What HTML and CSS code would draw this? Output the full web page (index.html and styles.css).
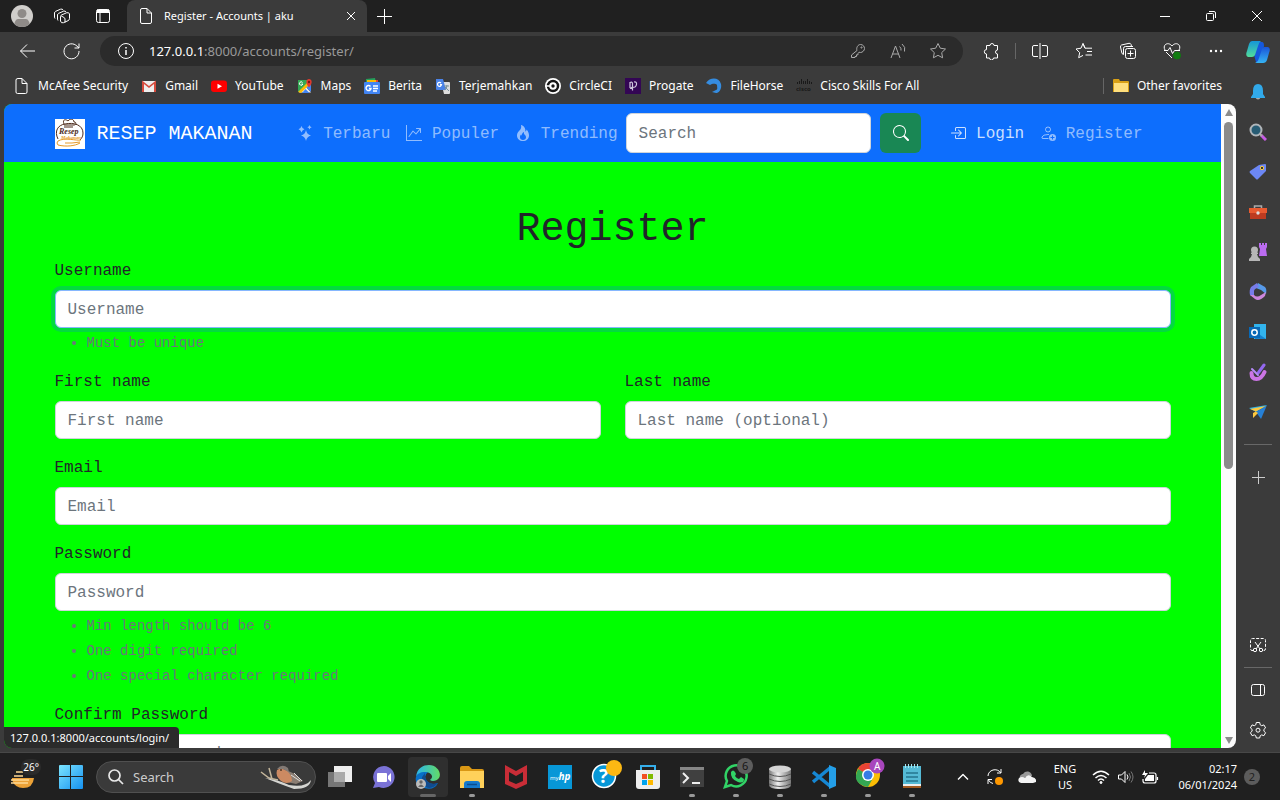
FILE: index.html
```html
<!DOCTYPE html>
<html lang="en">
<head>
<meta charset="utf-8">
<title>Register - Accounts | aku</title>
<meta name="viewport" content="width=device-width, initial-scale=1">
<link rel="stylesheet" href="styles.css">
</head>
<body>
<header class="tabstrip">
  <button class="tool tool-profile" aria-label="Profile"><svg width="22" height="22" viewBox="0 0 22 22"><defs><clipPath id="av"><circle cx="11" cy="11" r="11"/></clipPath></defs><g clip-path="url(#av)"><path fill="#d0cecb" d="M0 0h22v22H0z"/><circle cx="11" cy="8.500" r="4.500" fill="#8f8b88"/><path fill="#8f8b88" d="M3 22c0-5 2-8 4-8h8c2 0 4 3 4 8z"/></g></svg></button>
  <button class="tool tool-spaces" aria-label="Workspaces"><svg class="line" width="18" height="18" viewBox="0 0 18 18"><path d="M7.500 9.500q0-1 1-1.500l5-2.200q2.500-.8 3 1.200v4.500q0 1.500-1.500 2.200l-4.500 2q-2.500.8-3-1.700zM8 8.800l3 1.700q1 .5 1 1.500v3.500M5 13.500q-.5-.6-.5-1.500V8q0-1 1-1.600l5-2.200q2-.7 2.700 1M2 11.500q-.5-.6-.5-1.500V6q0-1 1-1.600l5-2.200q2-.7 2.700 1"/></svg></button>
  <button class="tool" aria-label="Tab actions"><svg class="line" width="16" height="16" viewBox="0 0 16 16"><rect x="1.500" y="1.500" width="13" height="13" rx="2"/><path d="M1.500 4.500h13M5 4.500v10" /><path d="M2 3h12" stroke-width="3"/></svg></button>
  <div class="tab">
    <svg class="line" width="14" height="18" viewBox="0 0 14 18"><path d="M3 1.500h5l4.500 4.500v9q0 1.500-1.500 1.500H3q-1.500 0-1.500-1.500V3Q1.500 1.500 3 1.500zM8 1.500V6h4.500"/></svg>
    <span class="tab-title">Register - Accounts | aku</span>
    <button aria-label="Close tab"><svg class="line" width="12" height="12" viewBox="0 0 12 12"><path d="M2 2l8 8M10 2l-8 8"/></svg></button>
  </div>
  <button class="new-tab" aria-label="New tab"><svg class="line" width="15" height="15" viewBox="0 0 15 15"><path d="M7.500 0v15M0 7.500h15"/></svg></button>
  <div class="window-controls">
    <button aria-label="Minimize"><svg class="line" width="10" height="10" viewBox="0 0 10 10"><path d="M0 5.500h10"/></svg></button>
    <button aria-label="Restore"><svg class="line" width="12" height="12" viewBox="0 0 12 12"><rect x="1.500" y="3.500" width="7" height="7" rx="1"/><path d="M4 1.500h5q1.500 0 1.500 1.500v5"/></svg></button>
    <button aria-label="Close"><svg class="line" width="12" height="12" viewBox="0 0 12 12"><path d="M1 1l10 10M11 1L1 11"/></svg></button>
  </div>
</header>

<div class="browser">
  <div class="browser-main">
    <div class="toolbar">
      <button class="tool tool-back" aria-label="Back"><svg class="line" width="18" height="16" viewBox="0 0 18 16"><path d="M8 1.500 1.500 8 8 14.500M1.500 8H16"/></svg></button>
      <button class="tool" aria-label="Refresh"><svg class="line" width="18" height="18" viewBox="0 0 18 18"><path d="M16 9A7.500 7.500 0 1 1 14 4.200L16 6M16 1.500V6h-4.500"/></svg></button>
      <div class="address">
        <svg class="line" width="18" height="18" viewBox="0 0 18 18"><circle cx="9" cy="9" r="7.500"/><path d="M9 8v5M9 5v1.500" stroke-width="1.500"/></svg>
        <span class="url"><b>127.0.0.1</b>:8000/accounts/register/</span>
        <button class="tool dim" aria-label="Saved passwords"><svg class="line" width="16" height="16" viewBox="0 0 16 16"><path d="M7 7.500C6 4.500 8 1.500 10.500 1.500s4 2 4 4S12.500 9.500 10.500 9.500L9 9.200 8 10.500v1.300H6.500v1.700H5v1H1.500V12z"/><circle cx="11.500" cy="4.500" r=".6"/></svg></button>
        <button class="tool dim" aria-label="Read aloud"><svg class="line" width="16" height="16" viewBox="0 0 16 16"><path d="M1 15 5.500 3 10 15M2.500 11h6M9.500 3.500q2 1.500 1.500 4M12 1q4 3 2.500 7.500"/></svg></button>
        <button class="tool dim" aria-label="Add to favorites"><svg class="line" width="18" height="18" viewBox="0 0 18 18"><path d="M9 1.500l2.300 4.700 5.200.8-3.800 3.600.9 5.200L9 13.300l-4.600 2.500.9-5.200L1.500 7l5.200-.8z"/></svg></button>
      </div>
      <button class="tool" aria-label="Extensions"><svg class="line" width="16" height="17" viewBox="0 0 16 17"><path d="M4 2.500h3a2 2 0 0 1 4 0h3.500V7a2 2 0 0 0 0 4v4h-4a2 2 0 0 1-4 0H3.500v-4a2.200 2.200 0 1 1 0-4.400V2.500z"/></svg></button>
      <span class="rule"></span>
      <button class="tool" aria-label="Split screen"><svg class="line" width="18" height="16" viewBox="0 0 18 16"><path d="M7 2.500H3Q1.500 2.500 1.500 4v8q0 1.500 1.500 1.500h4M11 2.500h4q1.500 0 1.500 1.500v8q0 1.500-1.500 1.500h-4M9 0v16"/></svg></button>
      <button class="tool" aria-label="Favorites"><svg class="line" width="18" height="18" viewBox="0 0 18 18"><path d="M10 6.200 8 1.500 6 6.200 1 7l3.700 3.600-1 5.100L8 13.400M8 1.500l2 4.700h7M12 9.500h5M10.500 13H17"/></svg></button>
      <button class="tool" aria-label="Collections"><svg class="line" width="18" height="18" viewBox="0 0 18 18"><rect x="6.500" y="6.500" width="10" height="10" rx="2"/><path d="M11.500 8.500v6M8.500 11.500h6M4.500 12.500 3 11.500 1.500 5q-.2-1.500 1-2L10 1.300q1.500-.2 2 1l.4 1.700M4.500 12.500V6.500q0-2 2-2H14"/></svg></button>
      <button class="tool" aria-label="Browser essentials"><svg class="line" width="18" height="18" viewBox="0 0 18 18"><path d="M2 8C-1 3 5-1 9 4c4-5 10-1 7 4M3 10l6 6M1 8.500h4l2-3 2.500 6 2-3H17"/><circle cx="14" cy="13.500" r="3.500" fill="#107c10" stroke="#107c10"/></svg></button>
      <button class="tool" aria-label="Settings and more"><svg width="14" height="4" viewBox="0 0 14 4" fill="#fff"><circle cx="2" cy="2" r="1.200"/><circle cx="7" cy="2" r="1.200"/><circle cx="12" cy="2" r="1.200"/></svg></button>
    </div>

    <nav class="bookmarks" aria-label="Favorites bar">
      <a href="#"><svg class="line" width="16" height="18" viewBox="0 0 16 18"><path d="M4 1.500h4l5 5V15q0 1.500-1.500 1.500H3.500Q2 16.500 2 15V3Q2 1.500 4 1.500zM8 1.500v5h5"/></svg>McAfee Security</a>
      <a href="#"><svg width="16" height="16" viewBox="0 0 16 16"><path fill="#eee" d="M1 3h14v11H1z"/><path fill="#d54b3d" d="M1 2.500 8 8l7-5.500V14h-2V6L8 10 3 6v8H1z"/></svg>Gmail</a>
      <a href="#"><svg width="16" height="16" viewBox="0 0 16 16"><rect y="2.500" width="16" height="11.500" rx="3" fill="red"/><path fill="#fff" d="M6.500 5.700v5L11 8.200z"/></svg>YouTube</a>
      <a href="#"><svg width="16" height="16" viewBox="0 0 16 16"><path fill="#34a853" d="M1 2h10v7L1 14z"/><path fill="#4285f4" d="M8 8l6 6V5z"/><path fill="#f1f1f1" d="M2 14.500 8 8l6 6.500z"/><path fill="#fbbc04" d="M1 14 10 5l2 2-8 8z"/><path fill="#4285f4" d="M5 15l3.500-4 4 4z"/><path fill="#e33b2e" d="M12 9.500C8 5 9 1 12 1s4 4 0 8.500z"/><circle cx="12" cy="4" r="1.200" fill="#7a1710"/><path fill="none" stroke="#fff" d="M5.500 4.500a1.700 1.700 0 1 0 .3 1.500H4.500"/></svg>Maps</a>
      <a href="#"><svg width="16" height="16" viewBox="0 0 16 16"><path fill="#24a05a" d="M2 1l9-1 1 5H2z"/><path fill="#fbbc04" d="M3 2h11v4H3z"/><path fill="#e84335" d="M12 2h2v3h-2z"/><rect y="4" width="16" height="12" rx="1" fill="#4285f4"/><path fill="none" stroke="#fff" stroke-width="1.400" d="M6.500 8.500a2.500 2.500 0 1 0 .5 2H5M9 8h5M9 10.500h5M9 13h4"/></svg>Berita</a>
      <a href="#"><svg width="16" height="16" viewBox="0 0 16 16"><path fill="#ddd" d="M6 4h8q1 0 1 1v10q0 1-1 1H9z"/><path fill="#4a83e8" d="M1 1h7l3 11H2q-1 0-1-1z"/><path fill="none" stroke="#fff" stroke-width="1.200" d="M6 5a2 2 0 1 0 .5 1.700H5"/><path stroke="#78909c" fill="none" d="M9 8h5M12 7q0 4-3 5M10 9l4 4"/></svg>Terjemahkan</a>
      <a href="#"><svg width="16" height="16" viewBox="0 0 16 16"><circle cx="8" cy="8" r="8" fill="#fff"/><circle cx="8" cy="8" r="5" fill="none" stroke="#161616" stroke-width="2.500"/><circle cx="8" cy="8" r="1.700" fill="#161616"/><path stroke="#fff" stroke-width="1.500" d="M0 8h5"/></svg>CircleCI</a>
      <a href="#"><svg width="16" height="16" viewBox="0 0 16 16"><path fill="#330654" d="M0 0h16v16H0z"/><path stroke="#cfc6dc" stroke-width="1.200" fill="none" d="M5 10V4.500q2.500-1 2.500 1V9L5 10.500M9 4q3-.5 2.500 2.500T7.500 9.500v3"/></svg>Progate</a>
      <a href="#"><svg width="16" height="16" viewBox="0 0 16 16"><path fill="#358ce0" d="M0 5C4-1 13-1 15 6c1 5-2 9-5 9l-4-1 4-2c2-1 1-3 1-5-2-2-5-1-7 0l-2-1z"/></svg>FileHorse</a>
      <a href="#"><svg width="16" height="16" viewBox="0 0 16 16"><path stroke="#191919" d="M1.500 4v2M3.500 3v3M5.500 1v5M7.500 3v3M9.500 3v3M11.500 1v5M13.500 3v3M15.500 4v2"/><text y="13" class="cisco">cisco</text></svg>Cisco Skills For All</a>
      <span class="rule"></span>
      <a href="#"><svg width="16" height="16" viewBox="0 0 16 16"><path fill="#d9a016" d="M0 2q0-1 1-1h5l1 2h8q1 0 1 1v10H0z"/><path fill="#ffdf7d" d="M1 5h14v9H1z"/></svg>Other favorites</a>
    </nav>

    <div class="viewport">
      <div class="page">
        <nav class="navbar">
          <div class="container nav-row">
            <a class="brand" href="#"><svg width="30" height="30" viewBox="0 0 30 30"><path fill="#fff" d="M0 0h30v30H0z"/><g fill="none" stroke="#4d2c1d"><path d="M3 20C-1 12 3 6 10 5c9-2 18 1 18 9 0 3-1 5-3 7M9 5C7 0 11 0 13 2c2-3 6-2 6 1 3 0 2 3 0 3H9M9 8h9"/><path stroke="#e59b28" d="M3 22c7-4 18 0 23-1M3 26c8 2 17 1 22-2M3 22q-2 2 0 4M10 24h7l8-1"/></g><text x="4" y="15" class="logo-a">Resep</text><text x="6" y="20" class="logo-b">Makanan</text></svg>RESEP MAKANAN</a>
            <div class="nav-links">
              <a href="#"><svg width="16" height="16" viewBox="0 0 16 16" fill="currentColor"><path d="M8 5q.8 4.500 5 5.500Q8.800 11.500 8 16q-.8-4.500-5-5.500Q7.200 9.500 8 5zM3.500 1q.6 2.600 3 3.200-2.400.7-3 3.300-.6-2.600-3-3.300 2.400-.6 3-3.200zM11.500 0q.4 1.700 2.200 2.200-1.800.5-2.200 2.300-.4-1.800-2.200-2.300 1.800-.5 2.200-2.200z"/></svg> Terbaru</a>
              <a href="#"><svg width="16" height="16" viewBox="0 0 16 16" fill="currentColor"><path fill-rule="evenodd" d="M0 0h1v15h15v1H0V0Zm10 3.500a.5.5 0 0 1 .5-.5h4a.5.5 0 0 1 .5.5v4a.5.5 0 0 1-1 0V4.900l-3.613 4.417a.5.5 0 0 1-.74.037L7.060 6.767l-3.656 5.027a.5.5 0 0 1-.808-.588l4-5.500a.5.5 0 0 1 .758-.06l2.609 2.610L13.445 4H10.500a.5.5 0 0 1-.5-.5Z"/></svg> Populer</a>
              <a href="#"><svg width="16" height="16" viewBox="0 0 16 16" fill="currentColor"><path d="M8 16c3.314 0 6-2 6-5.500 0-1.500-.5-4-2.500-6 .25 1.500-1.250 2-1.250 2C11 4 9 .5 6 0c.357 2 .5 4-2 6-1.250 1-2 2.729-2 4.500C2 14 4.686 16 8 16Zm0-1c-1.657 0-3-1-3-2.750 0-.75.25-2 1.250-3C6.125 10 7 10.500 7 10.500c-.375-1.250.5-3.250 2-3.500-.179 1-.25 2 1 3 .625.5 1 1.364 1 2.250C11 14 9.657 15 8 15Z"/></svg> Trending</a>
            </div>
            <form class="site-search">
              <input type="search" placeholder="Search" aria-label="Search">
              <button type="button" aria-label="Search"><svg width="16" height="16" viewBox="0 0 16 16" fill="currentColor"><path d="M11.742 10.344a6.500 6.500 0 1 0-1.397 1.398h-.001c.03.04.062.078.098.115l3.850 3.850a1 1 0 0 0 1.415-1.414l-3.850-3.850a1.007 1.007 0 0 0-.115-.1zM12 6.500a5.500 5.500 0 1 1-11 0 5.500 5.500 0 0 1 11 0z"/></svg></button>
            </form>
            <div class="nav-links account-links">
              <a href="#" class="hovered"><svg width="16" height="16" viewBox="0 0 16 16" fill="currentColor"><path d="M6 3.500a.5.5 0 0 1 .5-.5h8a.5.5 0 0 1 .5.5v9a.5.5 0 0 1-.5.5h-8a.5.5 0 0 1-.5-.5v-2a.5.5 0 0 0-1 0v2A1.500 1.500 0 0 0 6.500 14h8a1.500 1.500 0 0 0 1.500-1.500v-9A1.500 1.500 0 0 0 14.500 2h-8A1.500 1.500 0 0 0 5 3.500v2a.5.5 0 0 0 1 0v-2z"/><path d="M11.854 8.354a.5.5 0 0 0 0-.708l-3-3a.5.5 0 1 0-.708.708L10.293 7.500H1.500a.5.5 0 0 0 0 1h8.793l-2.147 2.146a.5.5 0 0 0 .708.708l3-3z"/></svg> Login</a>
              <a href="#"><svg width="16" height="16" viewBox="0 0 16 16" fill="none" stroke="currentColor"><circle cx="8" cy="4.500" r="2.500"/><path d="M8.500 13.500H2.700q-1 0-.7-1.500 1-2.500 6-2.500h1"/><circle cx="12.500" cy="12.500" r="3.500" fill="currentColor" stroke="none"/><path stroke="#0d6efd" d="M12.500 10.500v4M10.500 12.500h4"/></svg> Register</a>
            </div>
          </div>
        </nav>

        <main class="container">
          <form class="register">
            <h1>Register</h1>
            <div class="field field-help">
              <label for="username">Username</label>
              <input class="focused" id="username" type="text" placeholder="Username">
              <ul><li>Must be unique</li></ul>
            </div>
            <div class="field-pair">
              <div class="field"><label for="first">First name</label><input id="first" type="text" placeholder="First name"></div>
              <div class="field"><label for="last">Last name</label><input id="last" type="text" placeholder="Last name (optional)"></div>
            </div>
            <div class="field"><label for="email">Email</label><input id="email" type="email" placeholder="Email"></div>
            <div class="field field-help">
              <label for="password">Password</label>
              <input id="password" type="password" placeholder="Password">
              <ul><li>Min length should be 6</li><li>One digit required</li><li>One special character required</li></ul>
            </div>
            <div class="field"><label for="confirm">Confirm Password</label><input id="confirm" type="password" placeholder="Confirm password"></div>
          </form>
        </main>
      </div>
      <div class="scrollbar"><i class="arrow-up"></i><div class="track"><div class="thumb"></div></div><i class="arrow-down"></i></div>
      <div class="status">127.0.0.1:8000/accounts/login/</div>
    </div>
  </div>

  <aside class="sidebar">
    <button aria-label="Copilot"><svg width="24" height="22" viewBox="0 0 24 22"><defs><linearGradient id="c1" x2="0" y2="1"><stop stop-color="#1596d8"/><stop offset="1" stop-color="#52dd9a"/></linearGradient><linearGradient id="c2" x2="0" y2="1"><stop stop-color="#1a55d8"/><stop offset="1" stop-color="#35b4f4"/></linearGradient></defs><path fill="#1558dc" d="M8 14 12 1h4q2 0 2 4L14 20q-1 2-4 1z"/><path fill="url(#c1)" d="M6 0h9q-2 1-3 5l-3 9q-1 2-3 2H2q-3-1-1-6L3 3q1-3 3-3z"/><path fill="url(#c2)" d="M18 6h4q3 1 1 6l-2 7q-1 3-4 3H9q3-1 4-5l3-9q1-2 2-2z"/></svg></button>
    <button aria-label="Notifications"><svg width="16" height="18" viewBox="0 0 16 18"><path fill="#aaa" d="M5 14h6q-3 5-6 0z"/><path fill="#31a9e9" d="M8 1q5 0 5 7v3l2 3v1H1v-1l2-3V8q0-7 5-7z"/></svg></button>
    <button aria-label="Search"><svg width="18" height="18" viewBox="0 0 18 18"><path stroke="#c75ce5" stroke-width="3" d="m12 12 5 5"/><path stroke="#aaa" stroke-width="2" d="m10 10 3 3"/><circle cx="7" cy="7" r="5.500" fill="#275c74" stroke="#b0b5b9" stroke-width="2"/></svg></button>
    <button aria-label="Shopping"><svg width="18" height="18" viewBox="0 0 18 18"><path fill="#6c87f5" d="M10 2 16 1q1 0 1 1v6l-8 8q-1 1-2 0L1 10q-1-1 0-2z"/><circle cx="13" cy="5" r="1.700" fill="#333" stroke="#ffce37"/></svg></button>
    <button aria-label="Tools"><svg width="18" height="16" viewBox="0 0 18 16"><path fill="none" stroke="#aaa" stroke-width="1.500" d="M5.500 5V2h7v3"/><path fill="#e85a30" d="M0 4h18v5H0z"/><path fill="#bd3b20" d="M1 9h16v6H1z"/><circle cx="9" cy="9" r="1.700" fill="#ddd"/></svg></button>
    <button aria-label="Games"><svg width="18" height="18" viewBox="0 0 18 18"><path fill="#bb6cf0" d="M10 0h2v2h1V0h2v2h1V0h2v4l-1 2 1 7h-8l1-7-1-2z"/><path fill="#b6b6b6" d="M2 7a3.500 3.500 0 1 1 7 0q0 1.500-1 2.500h1V11H8l1 3 2 2v2H0v-2l2-2 1-3H2V9.500h1Q2 8.500 2 7z"/></svg></button>
    <button aria-label="Microsoft 365"><svg width="18" height="18" viewBox="0 0 18 18"><path fill="#579ae9" d="M9 0 16 4q2 2 1 7l-5-4-5-2z"/><path fill="#777ce9" d="M8 0 2 4Q0 7 1 12l4 2V8q0-2 5-4z"/><path fill="#cc87dc" d="M1 12l5 4q4 3 10-3l1-4-5 3q-4 3-7 0z"/></svg></button>
    <button aria-label="Outlook"><svg width="18" height="18" viewBox="0 0 18 18"><path fill="#32b4ed" d="M5 1h12v15H5z"/><path fill="#1682ce" d="M7 9l10 7H6z"/><path fill="#0869b7" d="M0 4h11v11H0z"/><circle cx="5.500" cy="9.500" r="2.700" fill="none" stroke="#fff" stroke-width="1.500"/></svg></button>
    <button aria-label="Designer"><svg width="18" height="18" viewBox="0 0 18 18"><path fill="none" stroke="#cc75e5" stroke-width="4" stroke-linecap="round" d="M2.500 10q0 6 5 6t8-7"/><path stroke="#9368ef" stroke-width="3" stroke-linecap="round" d="M9.500 9.500 15 2"/><path stroke="#b68bf8" stroke-width="2" stroke-linecap="round" d="M3 6l6 6"/></svg></button>
    <button aria-label="Drop"><svg width="18" height="14" viewBox="0 0 18 14"><path fill="#33b5e8" d="M0 3 18 0 7 7z"/><path fill="#2680d6" d="M18 0 12 14 7 7z"/><path fill="#ffc83d" d="M1 4l16-3L4 8v5l5-5-3-2z"/></svg></button>
    <hr>
    <button aria-label="Customize"><svg class="line thin" width="13" height="13" viewBox="0 0 13 13"><path d="M6.500 0v13M0 6.500h13"/></svg></button>
    <div class="sidebar-bottom">
      <button aria-label="Screenshot"><svg class="line" width="18" height="16" viewBox="0 0 18 16"><path stroke-dasharray="3 1.500" d="M4 13.500H3q-1.500 0-1.500-2v-8q0-2 2-2h11q2 0 2 2v8q0 2-1.500 2h-1"/><path d="m6 5 5 7M12 5l-5 7"/><circle cx="6" cy="13" r="1.700"/><circle cx="12" cy="13" r="1.700"/></svg></button>
      <hr>
      <button aria-label="Hide sidebar"><svg class="line" width="16" height="14" viewBox="0 0 16 14"><rect x="1.500" y="1.500" width="13" height="11" rx="2"/><path d="M10.500 1.500v11"/></svg></button>
      <button aria-label="Settings"><svg class="line" width="18" height="18" viewBox="0 0 18 18"><path d="M7.300 1.500h3.400l.5 2.300 1.500.9 2.200-.8 1.700 3-1.700 1.500v1.800l1.700 1.500-1.700 3-2.200-.8-1.500.9-.5 2.200H7.300l-.5-2.200-1.500-.9-2.200.8-1.700-3 1.700-1.500V8.400L1.400 6.900l1.700-3 2.200.8 1.500-.9z"/><circle cx="9" cy="9.200" r="2"/></svg></button>
    </div>
  </aside>
</div>

<footer class="taskbar">
  <button class="weather" aria-label="Weather"><svg width="26" height="26" viewBox="0 0 26 26"><path fill="#eca237" d="M2 14h22q-1 10-11 10-8 0-11-8z"/><path stroke="#ffd993" stroke-width="1.500" d="M6 8h7M4 12h9M1 16h18M1 19h17"/></svg><span>26°</span></button>
  <button class="start" aria-label="Start"><svg width="24" height="24" viewBox="0 0 24 24"><defs><linearGradient id="w" x2="1" y2="1"><stop stop-color="#7ce5ff"/><stop offset="1" stop-color="#1591f0"/></linearGradient></defs><path fill="url(#w)" d="M0 1q0-1 1-1h10v11H0zM12 0h11q1 0 1 1v10H12zM0 12h11v12H1q-1 0-1-1zM12 12h12v11q0 1-1 1H12z"/></svg></button>
  <div class="task-search">
    <svg width="16" height="16" viewBox="0 0 16 16" fill="none" stroke="#e8e8e8" stroke-width="1.700"><circle cx="6.500" cy="6.500" r="5.500"/><path d="m10.500 10.500 4.500 4.500"/></svg>
    <input type="text" placeholder="Search" aria-label="Search Windows">
    <svg width="52" height="26" viewBox="0 0 52 26"><path fill="none" stroke="#c4b69b" stroke-width="1.500" d="M1 8l8 6 9 2M9 4l3 11"/><path fill="#d6d6d2" d="M5 14q14 2 24 7 16 3 22-5-1 9-17 9Q20 20 5 14z"/><path fill="#8a7d72" d="M26 6l9 4 8 7-7 3-9-2z"/><path fill="#cc8a62" d="M17 6q5-3 10 1 5 4 5 10-5 4-11 0-6-5-4-11z"/><path fill="#827a75" d="M17 5q5-6 11-1l1 4-6-3z"/><path stroke="#ddd" fill="none" d="m31 11 9 6M34 9l8 8"/><circle cx="21" cy="6" r=".8"/></svg>
  </div>
  <div class="apps">
    <button aria-label="Task view"><svg width="24" height="24" viewBox="0 0 24 24"><path fill="#eee" d="M6 1h18v16H6z"/><path fill="#777" d="M0 7h17v15H0z"/><path fill="#aaa" d="M6 7h11v10H6z"/></svg></button>
    <button aria-label="Chat"><svg width="24" height="24" viewBox="0 0 24 24"><path fill="#7a72d6" d="M12 1a11 11 0 1 1-5 21l-6 1 2-5A11 11 0 0 1 12 1z"/><rect x="5" y="8" width="10" height="9" rx="1" fill="#fff"/><path fill="#fff" d="m16 11 3-3v9l-3-3z"/></svg></button>
    <button class="running active" aria-label="Edge"><svg width="26" height="26" viewBox="0 0 26 26"><defs><linearGradient id="e1"><stop stop-color="#29b4ee"/><stop offset="1" stop-color="#63db65"/></linearGradient></defs><path fill="#0870c8" d="M1 13Q4 5 13 8q-5 4-1 9t11 2q-4 8-14 5T1 13z"/><path fill="url(#e1)" d="M1 13C2 4 8 1 14 1c8 0 13 8 10 13-2 3-7 4-9 2 5-4 0-8-5-8S2 10 1 13z"/><path fill="#114b8d" d="M10 9q-7 7 1 14 6 3 12-4-6 2-10-1-4-4-3-9z"/><circle cx="6" cy="20" r="5" fill="#bbb"/><circle cx="6" cy="18" r="1.700" fill="#666"/><path fill="#666" d="M3 23q3-5 6 0z"/></svg></button>
    <button class="running" aria-label="File Explorer"><svg width="26" height="24" viewBox="0 0 26 24"><path fill="#d99714" d="M1 3q0-2 2-2h7l3 3h10q2 0 2 2v7H1z"/><path fill="#ffd15a" d="M1 6h24v17H1z"/><path fill="#1679cc" d="M5 23v-4q0-3 3-3h10q3 0 3 3v4z"/><path stroke="#0c4d8e" stroke-width="1.500" d="M8 19.500h10"/></svg></button>
    <button aria-label="McAfee"><svg width="22" height="24" viewBox="0 0 22 24"><path fill="#c92d37" d="m0 0 11 6L22 0v19l-11 5L0 19zM4 7v9l7 3 7-3V7l-7 4z" fill-rule="evenodd"/></svg></button>
    <button aria-label="myHP"><svg width="24" height="24" viewBox="0 0 24 24"><path fill="#0797d7" d="M0 0h24v24H0z"/><text x="2" y="15" class="myhp">my<tspan class="hp">hp</tspan></text></svg></button>
    <button aria-label="HP Support"><svg class="over" width="32" height="30" viewBox="0 0 32 30"><circle cx="14" cy="17" r="11.500" fill="#0797d7" stroke="#fff" stroke-width="1.500"/><text x="9" y="24" class="question">?</text><circle cx="24" cy="9" r="8" fill="#fcb813"/></svg></button>
    <button aria-label="Microsoft Store"><svg width="24" height="26" viewBox="0 0 24 26"><path fill="none" stroke="#35aeea" stroke-width="2" d="M5 6V2h14v4"/><path fill="#eee" d="M0 6h24v16q0 3-3 3H3q-3 0-3-3z"/><path fill="#f25022" d="M6 10h5v5H6z"/><path fill="#7fba00" d="M12 10h5v5h-5z"/><path fill="#00a4ef" d="M6 16h5v5H6z"/><path fill="#ffb900" d="M12 16h5v5h-5z"/></svg></button>
    <button class="running" aria-label="Terminal"><svg width="24" height="20" viewBox="0 0 24 20"><path fill="#404040" d="M0 0h24v20H0z"/><path fill="#858585" d="M0 0h24v3H0z"/><path fill="none" stroke="#eee" stroke-width="2" d="m3 6 5 5-5 5M12 16h8"/></svg></button>
    <button class="running" aria-label="WhatsApp"><svg class="over" width="30" height="32" viewBox="0 0 30 32"><path fill="none" stroke="#31d366" stroke-width="2.500" d="m2 29 2-6a10.500 10.500 0 1 1 4 4z"/><path fill="#31d366" d="M8 14q2-3 4 0l1 2-1 2q2 3 4 3l2-2 3 2q0 5-6 3-8-3-7-10z"/><circle cx="22" cy="8" r="8" fill="#5d5d5d"/><text x="19" y="12" class="count">6</text></svg></button>
    <button class="running" aria-label="Database"><svg width="24" height="24" viewBox="0 0 24 24"><defs><linearGradient id="d"><stop stop-color="#777"/><stop offset=".4" stop-color="#eee"/><stop offset="1" stop-color="#777"/></linearGradient></defs><path fill="url(#d)" d="M1 4h22v16q0 4-11 4T1 20z"/><path fill="none" stroke="#555" d="M1 9q11 5 22 0M1 14q11 5 22 0M1 19q11 5 22 0"/><ellipse cx="12" cy="4" rx="11" ry="3.500" fill="#d4d4d4"/></svg></button>
    <button class="running" aria-label="Visual Studio Code"><svg width="24" height="24" viewBox="0 0 24 24"><path fill="none" stroke="#1687d3" stroke-width="3.500" d="M18 3 1 17M1 7l17 14"/><path fill="#249fe8" d="m17 0 7 3v18l-7 3z"/></svg></button>
    <button class="running" aria-label="Chrome"><svg class="over" width="30" height="32" viewBox="0 0 30 32"><circle cx="13" cy="17" r="12" fill="#fbbc04"/><path fill="#e84335" d="M13 17 3 11Q6 5 13 5q8 0 11 6z"/><path fill="#34a853" d="M13 17 3 11q-5 10 2 15 4 3 8 3l5-9z"/><circle cx="13" cy="17" r="6" fill="#fff"/><circle cx="13" cy="17" r="4.500" fill="#377ce5"/><circle cx="22" cy="8" r="7.500" fill="#a846bd"/><text x="19" y="12" class="initial">A</text></svg></button>
    <button class="running" aria-label="Notepad"><svg width="20" height="25" viewBox="0 0 20 25"><path fill="#55bad5" d="M1 2h18v20H1z"/><path stroke="#25758f" stroke-width="1.500" d="M4 9h12M4 13h12M4 17h12"/><path stroke="#a4e6f0" d="M3.500 0v4M6.500 0v4M9.500 0v4M12.500 0v4M15.500 0v4"/><path fill="#eee" d="M1 20h18v2H1z"/><path fill="#a35a20" d="M1 22h18v2H1z"/></svg></button>
  </div>
  <div class="tray">
    <button aria-label="Show hidden icons"><svg class="line" width="12" height="8" viewBox="0 0 12 8"><path stroke-width="1.400" d="m1 6.500 5-5 5 5"/></svg></button>
    <button aria-label="Updates"><svg class="line" width="18" height="18" viewBox="0 0 18 18"><path d="M2 8C2 2 11-1 15 5M15 1v4h-4M7 15.500Q4 15 2.500 12M2 16v-4.500h4"/><circle cx="13" cy="13" r="4" fill="#ff9800" stroke="none"/></svg></button>
    <button aria-label="OneDrive"><svg width="18" height="12" viewBox="0 0 18 12"><path fill="#999" d="M2 8C1 4 4 3 5 3c3-5 9-2 9 2z"/><path fill="#f4f4f4" d="M3 12q-4-1-2-5 3-2 6 0 3-5 7-1 5 1 4 5l-3 1z"/></svg></button>
    <span class="language">ENG<br>US</span>
    <button class="system" aria-label="Network, sound and battery">
      <svg class="line" width="18" height="14" viewBox="0 0 18 14"><path stroke-width="1.500" d="M1 5q8-7.500 16 0M3.500 8q5.500-5 11 0M6 10.500q3-3 6 0"/><circle cx="9" cy="12.500" r="1" fill="#fff"/></svg>
      <svg class="line" width="17" height="14" viewBox="0 0 17 14"><path d="M1.500 5h3L8 1.500v11L4.500 9h-3zM10 4.500q2 2.500 0 5"/><path stroke="#777" d="M12 3q3 4 0 8M14 1.500q4 5.500 0 11"/></svg>
      <svg class="line" width="18" height="14" viewBox="0 0 18 14"><path stroke-width="1.200" d="M8 3h5q2 0 2 2v6q0 2-2 2H4q-2 0-2-2V9M16.500 7v3"/><path fill="#fff" stroke="none" d="M7 5h6v6H4V9z"/><path d="M4 0 1 5h3L3 8l4-5H4z" fill="#fff" stroke="none"/></svg>
    </button>
    <time>02:17<br>06/01/2024</time>
    <span class="notice">2</span>
  </div>
</footer>
</body>
</html>
```
FILE: styles.css
```css
* { box-sizing: border-box; }

body {
  margin: 0;
  height: 100vh;
  display: flex;
  flex-direction: column;
  overflow: hidden;
  background: #3b3b3b;
  color: #fff;
  font: 12px/16px "Noto Sans", "Open Sans", sans-serif;
}

button {
  border: 0;
  padding: 0;
  background: none;
  color: inherit;
  font: inherit;
  display: flex;
  align-items: center;
  justify-content: center;
}

a { color: inherit; text-decoration: none; }
svg { flex: none; }
.line { fill: none; stroke: #fff; stroke-linejoin: round; }
.thin { stroke: #ccc; }
.dim { opacity: .6; }
.rule { width: 1px; height: 16px; background: #666; flex: none; }

/* Tab strip */
.tabstrip { display: flex; align-items: center; height: 32px; background: #202020; flex: none; }
.tabstrip .tool { width: 43px; height: 32px; }
.tabstrip .tool-spaces { width: 38px; }
.tab {
  display: flex;
  align-items: center;
  gap: 11px;
  width: 240px;
  height: 32px;
  margin-left: 3px;
  padding: 0 10px 0 12px;
  border-radius: 8px 8px 0 0;
  background: #3b3b3b;
  font-size: 11px;
}
.tab-title { flex: 1; white-space: nowrap; }
.new-tab { width: 35px; height: 32px; }
.window-controls { display: flex; margin-left: auto; }
.window-controls button { width: 46px; height: 32px; }

/* Browser frame */
.browser { display: flex; flex: 1; min-height: 0; border-bottom: 1px solid #484848; }
.browser-main { display: flex; flex-direction: column; flex: 1; min-width: 0; }
.toolbar { display: flex; align-items: center; flex: none; height: 38px; }
.tool { width: 44px; height: 32px; flex: none; }
.tool-back { margin-left: 6px; }
.address {
  display: flex;
  align-items: center;
  flex: 1;
  height: 30px;
  margin: 0 6px;
  padding: 0 5px 0 17px;
  border-radius: 16px;
  background: #2b2b2b;
}
.address .tool { width: 40px; }
.url { flex: 1; margin-left: 14px; color: #999; font-size: 13px; }
.url b { color: #fff; font-weight: 400; }
.toolbar .rule { margin: 0 2px; }
.toolbar > .tool:last-child { margin-right: -2px; }

.bookmarks {
  display: flex;
  align-items: center;
  gap: 13px;
  flex: none;
  height: 34px;
  padding: 0 14px 2px;
  font-size: 12px;
  white-space: nowrap;
}
.bookmarks a { display: flex; align-items: center; gap: 8px; }
.bookmarks .rule { margin: 0 -4px 0 auto; }
.cisco { font-size: 6px; font-weight: 700; fill: #191919; }

/* Web page */
.viewport {
  position: relative;
  display: flex;
  flex: 1;
  min-height: 0;
  margin: 0 0 4px 4px;
  border-radius: 8px;
  overflow: hidden;
}
.page {
  flex: 1;
  min-width: 0;
  background: #0f0;
  color: #212529;
  font: 16px/24px "Liberation Mono", monospace;
}
.container { width: 100%; max-width: 1140px; margin: 0 auto; padding: 0 12px; }
.navbar { background: #0d6efd; padding: 9px 0; }
.nav-row { display: flex; align-items: center; height: 40px; }
.brand { display: flex; align-items: center; gap: 12px; margin-right: 37px; padding-top: 2px; color: #fff; font-size: 20px; white-space: nowrap; }
.nav-links { display: flex; color: rgba(255, 255, 255, .55); white-space: nowrap; }
.nav-links a { padding: 9px 8px 7px; }
.nav-links svg { vertical-align: -3px; }
.nav-links .hovered { color: rgba(255, 255, 255, .8); }
.account-links { margin: 0 20px 0 21px; }
.site-search { display: flex; flex: 1; gap: 9px; min-width: 0; }
.site-search button { width: 41px; height: 40px; border-radius: 6px; background: #198754; color: #fff; }
.page input {
  display: block;
  width: 100%;
  min-width: 0;
  height: 38px;
  padding: 7px 12px 5px;
  border: 1px solid #ced4da;
  border-radius: 6px;
  background: #fff;
  color: #212529;
  font: inherit;
  outline: 0;
}
.page .site-search input { flex: 1; height: 40px; }
.page input::placeholder { color: #6c757d; opacity: 1; }
.page input.focused { border-color: #86b7fe; box-shadow: 0 0 0 4px rgba(13, 110, 253, .25); }
.register { padding-top: 40px; }
h1 { margin: 0; font-size: 40px; line-height: 56px; font-weight: 400; text-align: center; }
.field { margin-bottom: 16px; }
.field-help { margin-bottom: 13px; }
.field label { display: block; margin-bottom: 7px; padding-top: 1px; }
.field ul { margin: 3px 0 0; padding-left: 32px; color: #6c757d; font-size: 14px; line-height: 25px; }
.field-pair { display: grid; grid-template-columns: 1fr 1fr; gap: 24px; }
.logo-a { font: italic 700 8px "Liberation Serif", serif; fill: #4d2c1d; }
.logo-b { font: italic 700 5px "Liberation Serif", serif; fill: #e59b28; }

.scrollbar { display: flex; flex-direction: column; align-items: center; width: 15px; padding: 5px 0 4px; background: #fcfcfc; }
.track { flex: 1; width: 9px; margin: 6px 0; }
.thumb { height: 57%; border-radius: 5px; background: #8b8b8b; }
.arrow-up, .arrow-down { border: 4px solid transparent; }
.arrow-up { border-top: 0; border-bottom: 7px solid #8b8b8b; }
.arrow-down { border-bottom: 0; border-top: 7px solid #8b8b8b; }
.status {
  position: absolute;
  left: 0;
  bottom: 0;
  padding: 3px 10px 3px 6px;
  border-radius: 0 4px 0 0;
  background: #2b2b2b;
  font-size: 11px;
  line-height: 15px;
}

/* Edge sidebar */
.sidebar { display: flex; flex-direction: column; width: 44px; flex: none; }
.sidebar button { width: 44px; height: 40px; flex: none; }
.sidebar hr { width: 28px; margin: 12px auto; border: 0; border-top: 1px solid #686868; }
.sidebar-bottom { margin-top: auto; padding-bottom: 2px; }
.sidebar-bottom hr { margin: 2px auto; }

/* Taskbar */
.taskbar { display: flex; align-items: center; flex: none; height: 47px; background: #202020; }
.weather { position: relative; width: 46px; height: 40px; }
.weather span { position: absolute; top: 2px; right: 5px; padding: 0 2px; border-radius: 8px; background: #2b2b2b; font-size: 10px; }
.start { width: 50px; height: 40px; }
.task-search {
  display: flex;
  align-items: center;
  gap: 9px;
  width: 220px;
  height: 32px;
  padding: 0 3px 0 11px;
  border: 1px solid #505050;
  border-radius: 16px;
  background: #3a3a3a;
}
.task-search input { flex: 1; min-width: 0; padding: 0; border: 0; background: none; color: #ccc; font: inherit; font-size: 13px; }
.task-search input::placeholder { color: #ccc; opacity: 1; }
.apps { display: flex; gap: 4px; margin-left: 4px; }
.apps button { position: relative; width: 40px; height: 40px; border-radius: 4px; }
.apps .active { background: #2f2f2f; }
.apps .over { margin: -6px -3px 0 0; }
.running::after { content: ""; position: absolute; bottom: 0; left: 17px; width: 6px; height: 3px; border-radius: 2px; background: #999; }
.running.active::after { left: 12px; width: 16px; background: #666; }
.myhp { font: 6px "Open Sans", sans-serif; fill: #fff; }
.hp { font-size: 10px; font-weight: 700; font-style: italic; }
.question { font: 700 19px "Open Sans", sans-serif; fill: #fff; }
.count { font-size: 11px; fill: #161616; }
.initial { font-size: 10px; fill: #fff; }
.tray { display: flex; align-items: center; margin-left: auto; padding-right: 20px; font-size: 11px; text-align: center; }
.tray > button { width: 32px; height: 40px; }
.language { width: 44px; }
.tray .system { width: 76px; gap: 7px; }
.tray time { width: 74px; text-align: right; }
.notice { width: 16px; margin-left: 7px; border-radius: 8px; background: #5c5c5c; color: #202020; }
```
